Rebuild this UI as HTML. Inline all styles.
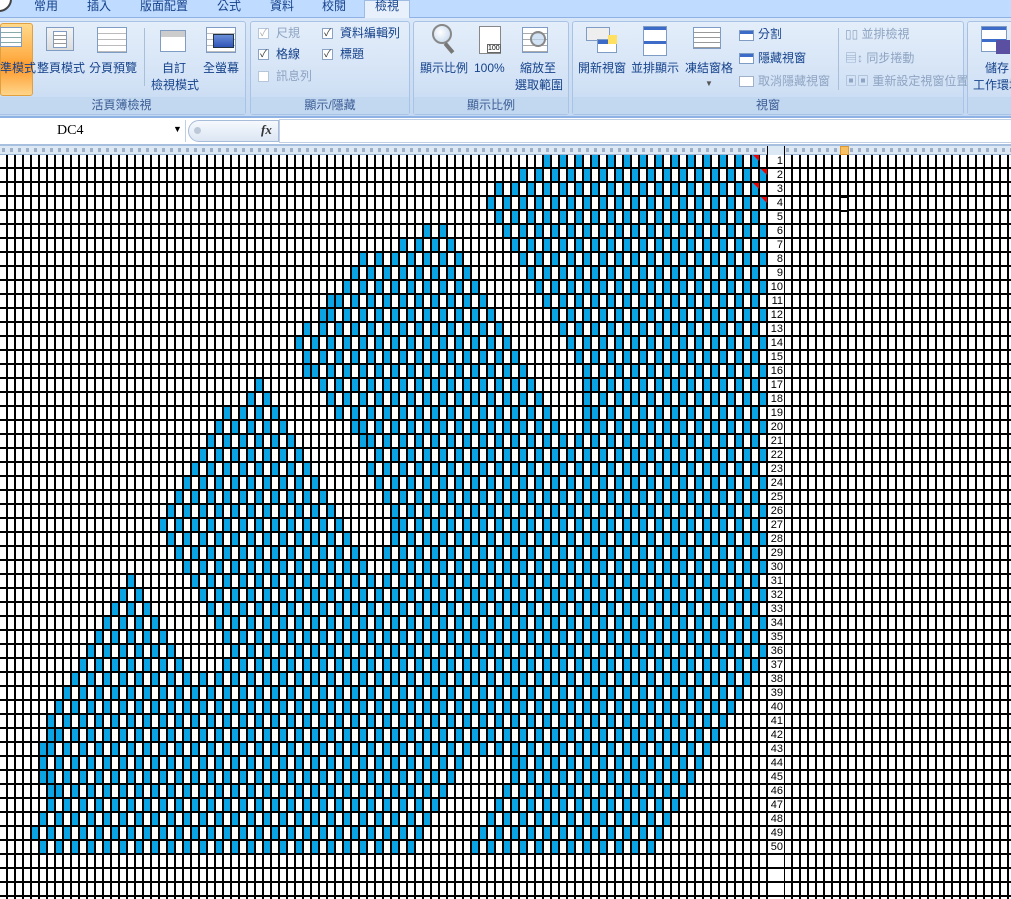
<!DOCTYPE html>
<html><head><meta charset="utf-8">
<style>
*{margin:0;padding:0;box-sizing:border-box}
body{width:1011px;height:899px;overflow:hidden;background:#fff;position:relative;font-family:"Liberation Sans","Noto Sans CJK TC",sans-serif;font-size:12px;color:#15428b}
.abs{position:absolute}
#tabs{left:0;top:0;width:1011px;height:18px;background:#bfdbff;border-bottom:1px solid #8db2e3}
.tab{position:absolute;top:-3px;font-size:12px;color:#15428b}
#rib{left:0;top:18px;width:1011px;height:100px;background:linear-gradient(#d9e7f8,#c4d8f1);border-bottom:2px solid #8db2e3}
.grp{position:absolute;top:3px;height:94px;border:1px solid #a9c3e6;border-radius:3px;background:linear-gradient(#e4eefa,#d1e1f5 70%,#c3d8f1)}
.gl{position:absolute;left:0;right:0;bottom:0;height:17px;background:#c2d7f0;text-align:center;font-size:12px;line-height:17px;color:#3b5d94}
.lb{position:absolute;font-size:12px;color:#15428b;white-space:nowrap;line-height:17px}
.gray{color:#8ea4c2}
.cb{position:absolute;width:11px;height:11px;border:1px solid #8aa2c4;background:#fff;font-size:10px;line-height:9px;text-align:center;color:#333}
.ic{position:absolute;border:1px solid #7f9cc4;background:#fff}
#fb{left:0;top:118px;width:1011px;height:28px;background:#fff;border-bottom:2px solid #a7c0e0}
#hdr{left:0;top:146px;width:1011px;height:9px;background:#dde8f5;border-bottom:1px solid #9eb6d6}
#hdr::after{content:"";position:absolute;left:0;top:2px;width:100%;height:4px;background:repeating-linear-gradient(90deg,transparent 0 2px,#9fb0c8 2px 5px,transparent 5px 8px)}
.s{position:absolute;height:14px;background:repeating-linear-gradient(90deg,#0aa3e4 0 8px,transparent 8px 16px)}
.b{background-position:8px 0}
#gl{left:0;top:155px;width:767px;height:744px;background:repeating-linear-gradient(90deg,transparent 0 6px,#000 6px 8px),repeating-linear-gradient(180deg,transparent 0 12px,#000 12px 14px)}
#gr{left:785px;top:155px;width:226px;height:744px;background:repeating-linear-gradient(90deg,transparent 0 6px,#000 6px 8px),repeating-linear-gradient(180deg,transparent 0 12px,#000 12px 14px)}
#rh{left:767px;top:146px;width:18px;height:753px;background:#fff;border-left:1px solid #000;border-right:1px solid #000}
#rhl{left:767px;top:155px;width:18px;height:744px;background:repeating-linear-gradient(180deg,transparent 0 12px,#000 12px 14px)}
.n{position:absolute;left:767px;width:16px;text-align:right;font-family:"Liberation Sans",sans-serif;font-size:11px;line-height:13px;color:#000}
.tri{position:absolute;width:0;height:0;border-top:6px solid #e00;border-left:6px solid transparent}
</style></head><body>

<div id="tabs" class="abs">
<div class="abs" style="left:-14px;top:-14px;width:26px;height:26px;border-radius:50%;background:#fff;border:2px solid #444"></div>
<span class="tab" style="left:34px">常用</span>
<span class="tab" style="left:87px">插入</span>
<span class="tab" style="left:140px">版面配置</span>
<span class="tab" style="left:217px">公式</span>
<span class="tab" style="left:270px">資料</span>
<span class="tab" style="left:322px">校閱</span>
<div class="abs" style="left:364px;top:0;width:46px;height:19px;background:#e8f0fb;border:1px solid #9ebbe3;border-bottom:none"></div>
<span class="tab" style="left:375px">檢視</span>
</div>

<div id="rib" class="abs">
 <div class="grp" style="left:-3px;width:249px"><div class="gl">活頁簿檢視</div></div>
 <div class="grp" style="left:250px;width:160px"><div class="gl">顯示/隱藏</div></div>
 <div class="grp" style="left:413px;width:156px"><div class="gl">顯示比例</div></div>
 <div class="grp" style="left:572px;width:392px"><div class="gl">視窗</div></div>
 <div class="grp" style="left:967px;width:50px"><div class="gl"></div></div>
 <div class="abs" style="left:0;top:5px;width:33px;height:73px;border:1px solid #e0a040;border-radius:3px;background:linear-gradient(#ffd98a,#ffb04a 45%,#ff9a2a 60%,#ffd58a)"></div>
 <div class="ic" style="left:0;top:9px;width:22px;height:20px;background:repeating-linear-gradient(180deg,#fff 0 4px,#8aa 4px 5px)"></div>
 <div class="lb" style="left:0;top:42px">準模式</div>
 <div class="ic" style="left:46px;top:9px;width:28px;height:24px;background:linear-gradient(#f4f4f4,#dcdcdc)"></div>
 <div class="ic" style="left:53px;top:13px;width:14px;height:17px;background:repeating-linear-gradient(180deg,#fff 0 3px,#999 3px 4px)"></div>
 <div class="lb" style="left:37px;top:42px">整頁模式</div>
 <div class="ic" style="left:97px;top:9px;width:30px;height:26px;background:repeating-linear-gradient(180deg,#fff 0 5px,#bbb 5px 6px)"></div>
 <div class="lb" style="left:89px;top:42px">分頁預覽</div>
 <div class="abs" style="left:144px;top:10px;width:1px;height:58px;background:#a8bed9"></div>
 <div class="ic" style="left:160px;top:12px;width:26px;height:22px;background:linear-gradient(#ccc 0 6px,#fff 6px)"></div>
 <div class="lb" style="left:162px;top:42px">自訂</div>
 <div class="lb" style="left:151px;top:59px">檢視模式</div>
 <div class="ic" style="left:206px;top:9px;width:30px;height:26px;background:repeating-linear-gradient(180deg,#fff 0 5px,#bbb 5px 6px)"></div>
 <div class="abs" style="left:213px;top:16px;width:21px;height:14px;background:linear-gradient(#6c8fd8,#2f55b8);border:1px solid #234"></div>
 <div class="lb" style="left:203px;top:42px">全螢幕</div>
 <div class="cb" style="left:258px;top:10px;border-color:#b5c5da;color:#aaa">✓</div><div class="lb gray" style="left:276px;top:7px">尺規</div>
 <div class="cb" style="left:258px;top:31px">✓</div><div class="lb" style="left:276px;top:28px">格線</div>
 <div class="cb" style="left:258px;top:53px;border-color:#b5c5da"></div><div class="lb gray" style="left:276px;top:50px">訊息列</div>
 <div class="cb" style="left:322px;top:10px">✓</div><div class="lb" style="left:340px;top:7px">資料編輯列</div>
 <div class="cb" style="left:322px;top:31px">✓</div><div class="lb" style="left:340px;top:28px">標題</div>
 <div class="abs" style="left:432px;top:6px;width:20px;height:20px;border-radius:50%;border:2px solid #888;background:radial-gradient(circle at 40% 40%,#fff,#bcd3ea)"></div>
 <div class="abs" style="left:447px;top:24px;width:4px;height:12px;background:#777;transform:rotate(-40deg)"></div>
 <div class="lb" style="left:420px;top:42px">顯示比例</div>
 <div class="ic" style="left:479px;top:8px;width:22px;height:28px;background:#fff;border-color:#888"></div>
 <div class="abs" style="left:487px;top:26px;font-size:7px;color:#000;background:#fff;border:1px solid #666">100</div>
 <div class="lb" style="left:474px;top:42px">100%</div>
 <div class="ic" style="left:522px;top:9px;width:26px;height:26px;background:repeating-linear-gradient(180deg,#fff 0 5px,#aaa 5px 6px)"></div>
 <div class="abs" style="left:530px;top:13px;width:16px;height:16px;border-radius:50%;border:2px solid #888;background:rgba(190,215,240,.7)"></div>
 <div class="lb" style="left:520px;top:42px">縮放至</div>
 <div class="lb" style="left:515px;top:59px">選取範圍</div>
 <div class="ic" style="left:586px;top:9px;width:24px;height:14px;background:#eee"></div>
 <div class="ic" style="left:597px;top:21px;width:20px;height:14px;background:linear-gradient(#3d6cc8 0 4px,#fff 4px)"></div>
 <div class="abs" style="left:608px;top:17px;width:9px;height:9px;background:#ffe060"></div>
 <div class="lb" style="left:578px;top:42px">開新視窗</div>
 <div class="ic" style="left:643px;top:8px;width:24px;height:30px;background:linear-gradient(#3d6cc8 0 3px,#fff 3px 14px,#3d6cc8 14px 17px,#fff 17px)"></div>
 <div class="lb" style="left:631px;top:42px">並排顯示</div>
 <div class="ic" style="left:693px;top:9px;width:28px;height:22px;background:repeating-linear-gradient(180deg,#fff 0 4px,#999 4px 5px)"></div>
 <div class="lb" style="left:685px;top:42px">凍結窗格</div>
 <div class="abs" style="left:705px;top:61px;font-size:8px;color:#555">▼</div>
 <div class="ic" style="left:739px;top:12px;width:15px;height:11px;background:linear-gradient(#3d6cc8 0 3px,#fff 3px)"></div><div class="lb" style="left:758px;top:8px">分割</div>
 <div class="ic" style="left:739px;top:35px;width:15px;height:11px;background:linear-gradient(#3d6cc8 0 3px,#fff 3px)"></div><div class="lb" style="left:758px;top:32px">隱藏視窗</div>
 <div class="ic" style="left:739px;top:58px;width:15px;height:11px;border-color:#a0b0c8"></div><div class="lb gray" style="left:758px;top:55px">取消隱藏視窗</div>
 <div class="abs" style="left:838px;top:10px;width:1px;height:62px;background:#a8bed9"></div>
 <div class="lb gray" style="left:845px;top:8px">▯▯ 並排檢視</div>
 <div class="lb gray" style="left:845px;top:32px">▤↕ 同步捲動</div>
 <div class="lb gray" style="left:845px;top:55px">▣▣ 重新設定視窗位置</div>
 <div class="abs" style="left:967px;top:10px;width:1px;height:62px;background:#a8bed9"></div>
 <div class="ic" style="left:981px;top:8px;width:26px;height:26px;background:linear-gradient(#3d6cc8 0 3px,#fff 3px 12px,#3d6cc8 12px 15px,#fff 15px)"></div>
 <div class="abs" style="left:996px;top:22px;width:14px;height:14px;background:#5a4fa0"></div>
 <div class="lb" style="left:985px;top:42px">儲存</div>
 <div class="lb" style="left:973px;top:59px">工作環境</div>
</div>

<div id="fb" class="abs">
 <div class="abs" style="left:0;top:2px;width:186px;height:22px;border-right:1px solid #c0cfe3"></div>
 <div class="abs" style="left:57px;top:5px;font-size:14px;color:#000;font-family:'Liberation Serif',serif">DC4</div>
 <div class="abs" style="left:173px;top:6px;font-size:9px;color:#000">▼</div>
 <div class="abs" style="left:188px;top:2px;width:91px;height:22px;border-radius:11px 0 0 11px;border:1px solid #a7bcd8;background:linear-gradient(#f6f9fd,#dce6f3)"></div>
 <div class="abs" style="left:194px;top:9px;width:7px;height:7px;border-radius:50%;background:#bcc8d8"></div>
 <div class="abs" style="left:261px;top:4px;font-family:'Liberation Serif',serif;font-style:italic;font-weight:bold;font-size:13px;color:#333">fx</div>
 <div class="abs" style="left:279px;top:1px;width:732px;height:24px;border:1px solid #c0cfe3;border-right:none"></div>
</div>
<div id="hdr" class="abs"></div>
<div class="abs" style="left:840px;top:146px;width:9px;height:9px;background:#f8c060;border:1px solid #e09a30"></div>

<div class="s" style="top:155px;left:544px;width:224px"></div>
<div class="s" style="top:169px;left:520px;width:248px"></div>
<div class="s" style="top:183px;left:496px;width:272px"></div>
<div class="s" style="top:197px;left:488px;width:280px"></div>
<div class="s" style="top:211px;left:496px;width:272px"></div>
<div class="s" style="top:225px;left:424px;width:24px"></div><div class="s" style="top:225px;left:504px;width:264px"></div>
<div class="s" style="top:239px;left:400px;width:56px"></div><div class="s" style="top:239px;left:512px;width:256px"></div>
<div class="s" style="top:253px;left:360px;width:112px"></div><div class="s" style="top:253px;left:520px;width:248px"></div>
<div class="s" style="top:267px;left:352px;width:128px"></div><div class="s" style="top:267px;left:528px;width:240px"></div>
<div class="s" style="top:281px;left:344px;width:144px"></div><div class="s" style="top:281px;left:536px;width:232px"></div>
<div class="s b" style="top:295px;left:328px;width:168px"></div><div class="s" style="top:295px;left:544px;width:224px"></div>
<div class="s b" style="top:309px;left:320px;width:184px"></div><div class="s" style="top:309px;left:552px;width:216px"></div>
<div class="s" style="top:323px;left:304px;width:208px"></div><div class="s" style="top:323px;left:560px;width:208px"></div>
<div class="s" style="top:337px;left:296px;width:224px"></div><div class="s" style="top:337px;left:568px;width:200px"></div>
<div class="s" style="top:351px;left:304px;width:224px"></div><div class="s" style="top:351px;left:576px;width:192px"></div>
<div class="s b" style="top:365px;left:304px;width:232px"></div><div class="s b" style="top:365px;left:576px;width:192px"></div>
<div class="s" style="top:379px;left:256px;width:8px"></div><div class="s" style="top:379px;left:320px;width:224px"></div><div class="s b" style="top:379px;left:584px;width:184px"></div>
<div class="s" style="top:393px;left:248px;width:24px"></div><div class="s" style="top:393px;left:328px;width:224px"></div><div class="s" style="top:393px;left:584px;width:184px"></div>
<div class="s" style="top:407px;left:224px;width:64px"></div><div class="s" style="top:407px;left:336px;width:224px"></div><div class="s b" style="top:407px;left:584px;width:184px"></div>
<div class="s" style="top:421px;left:216px;width:80px"></div><div class="s b" style="top:421px;left:352px;width:216px"></div><div class="s" style="top:421px;left:584px;width:184px"></div>
<div class="s" style="top:435px;left:208px;width:96px"></div><div class="s b" style="top:435px;left:360px;width:408px"></div>
<div class="s" style="top:449px;left:200px;width:112px"></div><div class="s b" style="top:449px;left:368px;width:400px"></div>
<div class="s" style="top:463px;left:192px;width:128px"></div><div class="s" style="top:463px;left:368px;width:400px"></div>
<div class="s" style="top:477px;left:184px;width:144px"></div><div class="s" style="top:477px;left:376px;width:392px"></div>
<div class="s" style="top:491px;left:176px;width:160px"></div><div class="s" style="top:491px;left:384px;width:384px"></div>
<div class="s" style="top:505px;left:168px;width:176px"></div><div class="s b" style="top:505px;left:384px;width:384px"></div>
<div class="s" style="top:519px;left:160px;width:192px"></div><div class="s b" style="top:519px;left:392px;width:376px"></div>
<div class="s" style="top:533px;left:168px;width:192px"></div><div class="s" style="top:533px;left:392px;width:376px"></div>
<div class="s" style="top:547px;left:176px;width:192px"></div><div class="s" style="top:547px;left:384px;width:384px"></div>
<div class="s" style="top:561px;left:184px;width:192px"></div><div class="s b" style="top:561px;left:384px;width:384px"></div>
<div class="s" style="top:575px;left:128px;width:8px"></div><div class="s" style="top:575px;left:192px;width:576px"></div>
<div class="s" style="top:589px;left:120px;width:24px"></div><div class="s" style="top:589px;left:200px;width:568px"></div>
<div class="s" style="top:603px;left:112px;width:48px"></div><div class="s" style="top:603px;left:208px;width:560px"></div>
<div class="s" style="top:617px;left:104px;width:64px"></div><div class="s" style="top:617px;left:216px;width:552px"></div>
<div class="s" style="top:631px;left:96px;width:80px"></div><div class="s" style="top:631px;left:224px;width:544px"></div>
<div class="s" style="top:645px;left:88px;width:96px"></div><div class="s b" style="top:645px;left:224px;width:544px"></div>
<div class="s" style="top:659px;left:80px;width:112px"></div><div class="s" style="top:659px;left:224px;width:544px"></div>
<div class="s" style="top:673px;left:72px;width:136px"></div><div class="s" style="top:673px;left:216px;width:544px"></div>
<div class="s" style="top:687px;left:64px;width:688px"></div>
<div class="s" style="top:701px;left:56px;width:688px"></div>
<div class="s" style="top:715px;left:48px;width:688px"></div>
<div class="s b" style="top:729px;left:48px;width:680px"></div>
<div class="s b" style="top:743px;left:40px;width:680px"></div>
<div class="s" style="top:757px;left:40px;width:432px"></div><div class="s b" style="top:757px;left:512px;width:200px"></div>
<div class="s b" style="top:771px;left:40px;width:424px"></div><div class="s" style="top:771px;left:512px;width:192px"></div>
<div class="s b" style="top:785px;left:48px;width:408px"></div><div class="s" style="top:785px;left:504px;width:192px"></div>
<div class="s" style="top:799px;left:48px;width:400px"></div><div class="s" style="top:799px;left:496px;width:192px"></div>
<div class="s" style="top:813px;left:40px;width:400px"></div><div class="s" style="top:813px;left:488px;width:192px"></div>
<div class="s" style="top:827px;left:32px;width:400px"></div><div class="s" style="top:827px;left:480px;width:192px"></div>
<div class="s" style="top:841px;left:40px;width:384px"></div><div class="s" style="top:841px;left:472px;width:192px"></div>

<div id="gl" class="abs"></div>
<div id="gr" class="abs"></div>
<div class="tri" style="left:753px;top:155px"></div>
<div class="tri" style="left:761px;top:169px"></div>
<div class="tri" style="left:753px;top:183px"></div>
<div class="tri" style="left:761px;top:197px"></div>
<div id="rh" class="abs"></div>
<div id="rhl" class="abs"></div>
<div class="abs" style="left:768px;top:146px;width:16px;height:9px;background:#dde8f5"></div>
<div class="abs" style="left:839px;top:196px;width:10px;height:16px;border:2px solid #000;background:#fff;border-radius:2px"></div>

<div class="n" style="top:155px">1</div><div class="n" style="top:169px">2</div><div class="n" style="top:183px">3</div><div class="n" style="top:197px">4</div><div class="n" style="top:211px">5</div>
<div class="n" style="top:225px">6</div><div class="n" style="top:239px">7</div><div class="n" style="top:253px">8</div><div class="n" style="top:267px">9</div><div class="n" style="top:281px">10</div>
<div class="n" style="top:295px">11</div><div class="n" style="top:309px">12</div><div class="n" style="top:323px">13</div><div class="n" style="top:337px">14</div><div class="n" style="top:351px">15</div>
<div class="n" style="top:365px">16</div><div class="n" style="top:379px">17</div><div class="n" style="top:393px">18</div><div class="n" style="top:407px">19</div><div class="n" style="top:421px">20</div>
<div class="n" style="top:435px">21</div><div class="n" style="top:449px">22</div><div class="n" style="top:463px">23</div><div class="n" style="top:477px">24</div><div class="n" style="top:491px">25</div>
<div class="n" style="top:505px">26</div><div class="n" style="top:519px">27</div><div class="n" style="top:533px">28</div><div class="n" style="top:547px">29</div><div class="n" style="top:561px">30</div>
<div class="n" style="top:575px">31</div><div class="n" style="top:589px">32</div><div class="n" style="top:603px">33</div><div class="n" style="top:617px">34</div><div class="n" style="top:631px">35</div>
<div class="n" style="top:645px">36</div><div class="n" style="top:659px">37</div><div class="n" style="top:673px">38</div><div class="n" style="top:687px">39</div><div class="n" style="top:701px">40</div>
<div class="n" style="top:715px">41</div><div class="n" style="top:729px">42</div><div class="n" style="top:743px">43</div><div class="n" style="top:757px">44</div><div class="n" style="top:771px">45</div>
<div class="n" style="top:785px">46</div><div class="n" style="top:799px">47</div><div class="n" style="top:813px">48</div><div class="n" style="top:827px">49</div><div class="n" style="top:841px">50</div>
</body></html>
